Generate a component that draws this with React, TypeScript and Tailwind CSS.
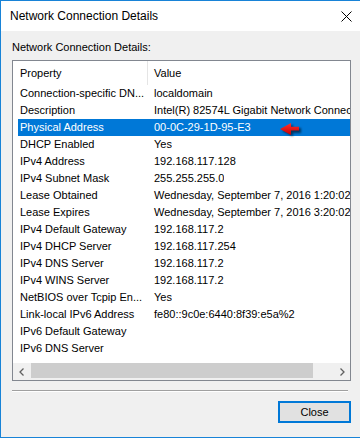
import React from "react";

const rows: [string, string][] = [
  ["Connection-specific DN...", "localdomain"],
  ["Description", "Intel(R) 82574L Gigabit Network Connection"],
  ["Physical Address", "00-0C-29-1D-95-E3"],
  ["DHCP Enabled", "Yes"],
  ["IPv4 Address", "192.168.117.128"],
  ["IPv4 Subnet Mask", "255.255.255.0"],
  ["Lease Obtained", "Wednesday, September 7, 2016 1:20:02 AM"],
  ["Lease Expires", "Wednesday, September 7, 2016 3:20:02 AM"],
  ["IPv4 Default Gateway", "192.168.117.2"],
  ["IPv4 DHCP Server", "192.168.117.254"],
  ["IPv4 DNS Server", "192.168.117.2"],
  ["IPv4 WINS Server", "192.168.117.2"],
  ["NetBIOS over Tcpip En...", "Yes"],
  ["Link-local IPv6 Address", "fe80::9c0e:6440:8f39:e5a%2"],
  ["IPv6 Default Gateway", ""],
  ["IPv6 DNS Server", ""],
];

function Arrow() {
  return (
    <svg width="26" height="18" viewBox="0 0 26 18" className="absolute left-[265px] top-[59px]">
      <defs>
        <filter id="sh" x="-30%" y="-30%" width="160%" height="160%">
          <feGaussianBlur stdDeviation="1.2" />
        </filter>
        <linearGradient id="rg" x1="0" y1="0" x2="0" y2="1">
          <stop offset="0" stopColor="#ff3030" />
          <stop offset="1" stopColor="#c80000" />
        </linearGradient>
      </defs>
      <polygon
        points="4,11 15,4.5 15,8 23,8 23,13 15,13 15,16.5"
        fill="#000"
        opacity="0.55"
        filter="url(#sh)"
      />
      <polygon points="2,9 13,3 13,6.8 21,6.8 21,10.6 13,10.6 13,15" fill="url(#rg)" />
    </svg>
  );
}

export default function App() {
  return (
    <div
      className="w-[360px] h-[438px] bg-[#f0f0f0] border-l border-t border-b border-[#1883d7] flex flex-col text-black overflow-hidden"
      style={{ fontFamily: '"Liberation Sans", Arial, sans-serif' }}
    >
      {/* Title bar */}
      <div className="h-[30px] bg-white flex items-center justify-between pl-[9px] pr-[8px] shrink-0">
        <span className="text-[12px] leading-none">Network Connection Details</span>
        <svg width="11" height="11" viewBox="0 0 11 11" className="mt-[1px]">
          <path d="M0.5 0.5 L10.5 10.5 M10.5 0.5 L0.5 10.5" stroke="#000" strokeWidth="1" />
        </svg>
      </div>

      {/* Body */}
      <div className="flex flex-col flex-1 text-[11px]">
        <div className="mt-[10px] ml-[11px] h-[13px] leading-[13px]">Network Connection Details:</div>

        <div className="relative mt-[6px] ml-[11px] w-[339px] h-[321px] border border-[#828790] bg-white flex flex-col">
          {/* header */}
          <div className="h-[24px] flex items-center shrink-0">
            <div className="w-[134px] pl-[7px]">Property</div>
            <div className="w-px h-[24px] bg-[#e5e5e5]" />
            <div className="pl-[6px]">Value</div>
          </div>
          {/* rows */}
          <div className="flex flex-col">
            {rows.map(([k, v], i) => (
              <div
                key={i}
                className={
                  "ml-[5px] h-[17px] leading-[17px] flex whitespace-nowrap overflow-hidden " +
                  (i === 2 ? "bg-[#0078d7] text-white" : "")
                }
              >
                <div className="w-[130px] pl-[2px] shrink-0 overflow-hidden">{k}</div>
                <div className="pl-[6px] overflow-hidden">{v}</div>
              </div>
            ))}
          </div>
          <div className="flex-1" />
          {/* horizontal scrollbar */}
          <div className="h-[17px] bg-[#f0f0f0] flex items-stretch shrink-0">
            <div className="w-[17px] flex items-center justify-center">
              <svg width="6" height="8" viewBox="0 0 6 8">
                <path d="M4.5 0.5 L1 4 L4.5 7.5" stroke="#606060" strokeWidth="1.3" fill="none" />
              </svg>
            </div>
            <div className="flex-1 flex items-stretch py-[0px]">
              <div className="ml-[1px] w-[282px] bg-[#cdcdcd] my-[0px] h-[15px]" />
            </div>
            <div className="w-[17px] flex items-center justify-center">
              <svg width="6" height="8" viewBox="0 0 6 8">
                <path d="M1.5 0.5 L5 4 L1.5 7.5" stroke="#606060" strokeWidth="1.3" fill="none" />
              </svg>
            </div>
          </div>
          <Arrow />
        </div>

        {/* separator */}
        <div className="mt-[9px] ml-[11px] w-[336px] border-t border-[#a0a0a0] border-b border-b-white" />

        {/* button */}
        <div className="flex justify-end pr-[9px] mt-[9px]">
          <button className="w-[73px] h-[22px] bg-[#e1e1e1] border-2 border-[#0078d7] text-[11px] leading-none flex items-center justify-center">
            Close
          </button>
        </div>
      </div>
    </div>
  );
}
